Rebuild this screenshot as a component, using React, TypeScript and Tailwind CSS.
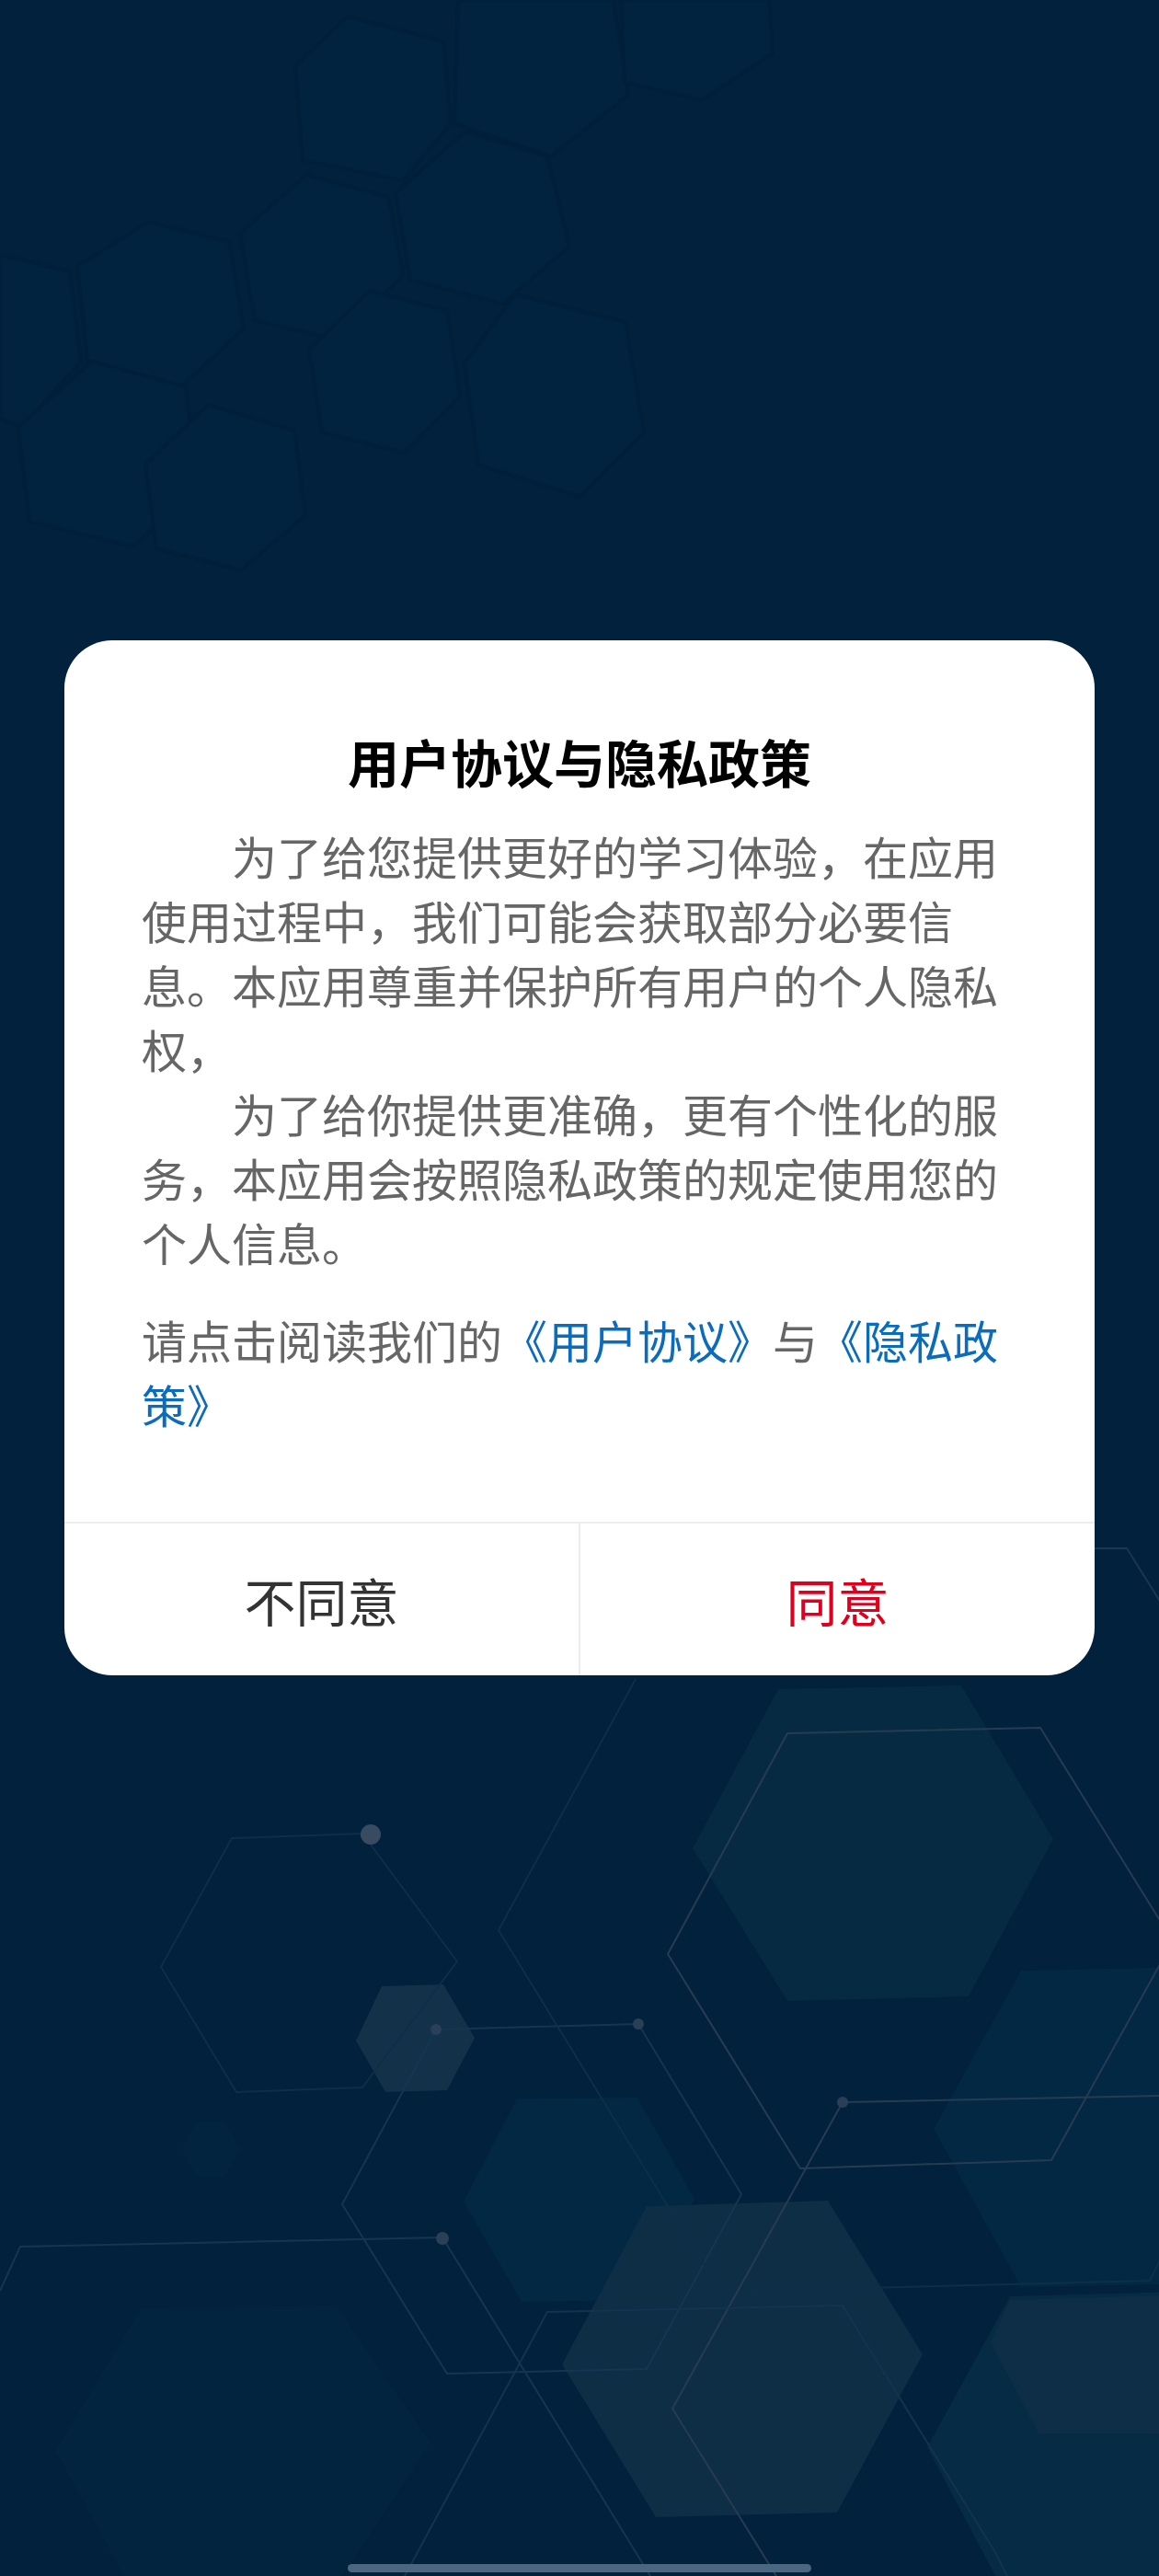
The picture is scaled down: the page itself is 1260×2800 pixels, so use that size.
import React from "react";

const FAINT_TOP = [
  "378,18 482,45 490,134 438,196 329,174 321,71",
  "498,0 667,0 683,103 599,170 494,134",
  "675,0 836,0 840,58 763,109 679,89",
  "506,143 595,170 619,268 546,330 446,304 430,210",
  "333,190 422,214 438,299 370,370 277,348 261,254",
  "161,241 249,263 265,357 193,424 96,402 84,290",
  "0,277 76,295 88,393 24,464 0,455",
  "100,393 201,420 217,527 145,594 32,567 20,464",
  "402,316 486,338 500,430 440,492 350,470 336,380",
  "226,440 320,468 332,560 262,620 170,596 158,505",
  "560,320 680,350 700,470 630,540 520,505 505,395",
];

// 背景の六角形パターン (下半分)
const FILLED = [
  { p: "153,2509 366,2506 468,2655 366,2810 140,2810 60,2664", c: "#02243f" },
  { p: "213,2306 245,2306 261,2336 245,2366 213,2366 197,2336", c: "#02243f" },
  { p: "562,2281 693,2280 755,2390 699,2500 567,2502 504,2393", c: "#032843" },
  { p: "1110,2142 1300,2138 1400,2310 1305,2482 1110,2486 1015,2314", c: "#032843" },
  { p: "1098,2496 1320,2490 1400,2660 1320,2830 1098,2830 1008,2660", c: "#062b45" },
  { p: "846,1836 1045,1832 1145,1999 1053,2170 856,2175 753,2009", c: "#072a43" },
  { p: "703,2398 900,2392 1003,2559 910,2731 713,2736 611,2570", c: "#0e2e46" },
  { p: "1098,2500 1290,2494 1330,2570 1290,2645 1129,2645 1077,2546", c: "#0d2e46" },
  { p: "415,2159 482,2157 516,2215 486,2272 419,2274 387,2218", c: "#13324a" },
];

function Backdrop() {
  return (
    <svg
      className="absolute inset-0"
      width="1260"
      height="2800"
      viewBox="0 0 1260 2800"
      fill="none"
    >
      {FAINT_TOP.map((p, i) => (
        <polygon key={i} points={p} fill="#01233f" stroke="#001f3a" strokeWidth="4" strokeLinejoin="round" />
      ))}
      {FILLED.map((h, i) => (
        <polygon key={i} points={h.p} fill={h.c} />
      ))}
      <g strokeWidth="2" strokeLinejoin="round">
        <polygon points="252,1998 394,1993 497,2132 394,2269 257,2274 175,2138" stroke="#0c3049" />
        <polygon points="474,2206 694,2200 806,2385 703,2575 486,2580 372,2396" stroke="#153650" />
        <polyline points="691,1825 542,2098 783,2491 1250,2479 1262,2455" stroke="#0c3049" />
        <polyline points="1190,1683 1225,1683 1262,1742" stroke="#1a3650" />
        <polygon points="856,1884 1131,1878 1275,2110 1143,2348 870,2357 726,2124" stroke="#263c52" />
        <polyline points="0,2490 22,2442 481,2432 707,2800" stroke="#163550" />
        <polyline points="1262,2278 916,2285 731,2618 844,2800" stroke="#263c52" />
        <polyline points="440,2800 595,2513 916,2506 1083,2776 1095,2800" stroke="#14334e" />
      </g>
      <circle cx="403" cy="1994" r="11" fill="#384b60" />
      <circle cx="474" cy="2206" r="6" fill="#2a4058" />
      <circle cx="694" cy="2200" r="6" fill="#2a4058" />
      <circle cx="481" cy="2433" r="7" fill="#2a4058" />
      <circle cx="916" cy="2285" r="6" fill="#2a4058" />
    </svg>
  );
}

export default function App() {
  return (
    <div className="relative min-h-[2800px] w-full overflow-hidden bg-[#01213d] font-['Noto_Sans_CJK_SC','Noto_Sans',sans-serif]">
      <Backdrop />

      <div className="relative flex justify-center pt-[696px]">
        {/* 同意ダイアログ */}
        <div className="w-[1120px] overflow-hidden rounded-[52px] bg-white">
          <div className="px-[84px] pt-[90px] pb-[93px]">
            <h2 className="text-center text-[56px] font-bold leading-[81px] text-black">
              用户协议与隐私政策
            </h2>
            <div className="mt-[28px] text-[49px] leading-[70px] text-[#666666]">
              <p className="indent-[2em]">
                为了给您提供更好的学习体验，在应用使用过程中，我们可能会获取部分必要信息。本应用尊重并保护所有用户的个人隐私权，
              </p>
              <p className="indent-[2em]">
                为了给你提供更准确，更有个性化的服务，本应用会按照隐私政策的规定使用您的个人信息。
              </p>
              <p className="mt-[36px]">
                请点击阅读我们的
                <a className="text-[#0b6bbd]">《用户协议》</a>与
                <a className="text-[#0b6bbd]">《隐私政策》</a>
              </p>
            </div>
          </div>

          <div className="flex h-[167px] border-t-2 border-[#ededed]">
            <button className="flex-1 text-[56px] text-[#333333]">不同意</button>
            <button className="flex-1 border-l-2 border-[#ededed] text-[56px] text-[#e0001e]">同意</button>
          </div>
        </div>
      </div>

      <div className="absolute bottom-[4px] left-[378px] h-[9px] w-[504px] rounded-full bg-[#4b6680]" />
    </div>
  );
}
